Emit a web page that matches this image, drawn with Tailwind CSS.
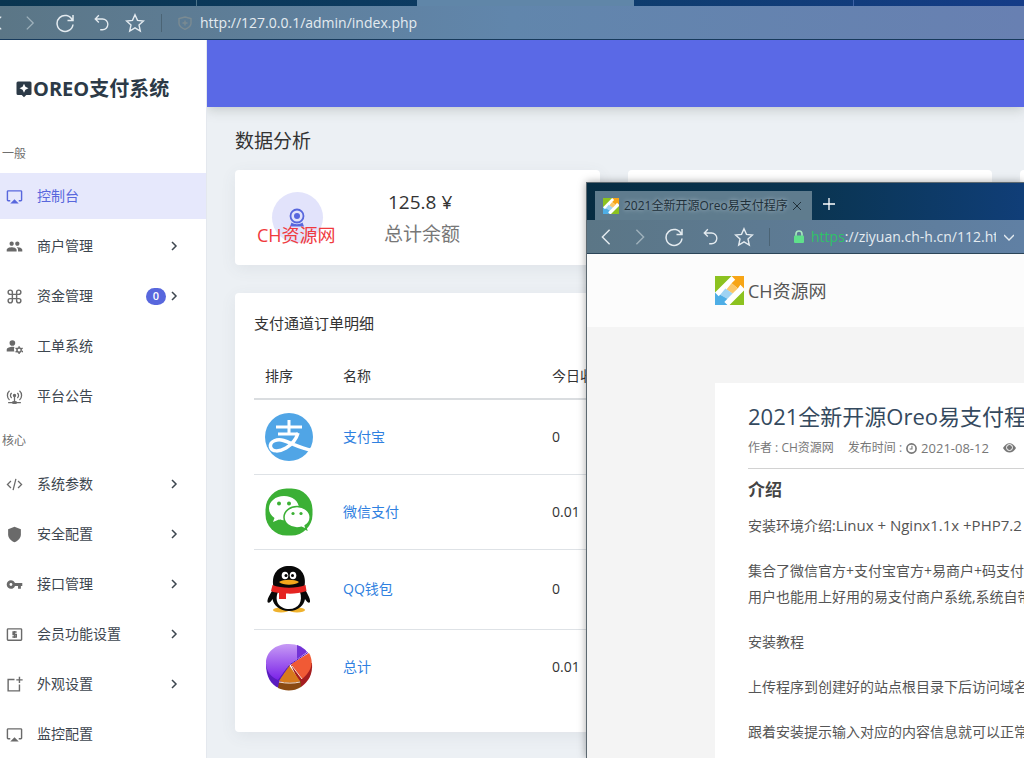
<!DOCTYPE html>
<html lang="zh-CN">
<head>
<meta charset="utf-8">
<title>OREO支付系统</title>
<script src="https://cdn.jsdelivr.net/npm/@tailwindcss/browser@4"></script>
</head>
<body class="relative flex h-screen flex-col overflow-hidden bg-[#ecf0f4] font-['Open_Sans','Noto_Sans_CJK_SC',sans-serif] text-sm text-[#333]">
<svg class="hidden">
  <defs>
    <symbol id="reload" viewBox="0 0 20 20" fill="none" stroke="currentColor" stroke-width="1.5"><path d="M18 2v5.5h-5.5M17.4 7.2A8 8 0 1 0 18 11.5"/></symbol>
    <symbol id="undo" viewBox="0 0 20 20" fill="none" stroke="currentColor" stroke-width="1.5"><path d="M6.5 1.5 2.5 5.5l4 4M2.5 5.5h8a6 6 0 0 1 0 12H8"/></symbol>
    <symbol id="star" viewBox="0 0 20 20" fill="none" stroke="currentColor" stroke-width="1.4"><path d="m10 1.8 2.5 5.6 6 .6-4.5 4 1.3 6-5.3-3.1L4.7 18 6 12 1.5 8l6-.6z"/></symbol>
    <symbol id="back" viewBox="0 0 20 20" fill="none" stroke="currentColor" stroke-width="1.6"><path d="m14 2-8 8 8 8"/></symbol>
    <symbol id="next" viewBox="0 0 20 20" fill="none" stroke="currentColor" stroke-width="1.6"><path d="m6 2 8 8-8 8"/></symbol>
    <symbol id="chev" viewBox="0 0 10 10" fill="none" stroke="currentColor" stroke-width="1.5"><path d="m3 1 4 4-4 4"/></symbol>
    <symbol id="screen" viewBox="0 0 24 24" fill="currentColor"><path d="M6 22h12l-6-6-6 6zM21 3H3c-1.1 0-2 .9-2 2v12c0 1.1.9 2 2 2h3v-2H3V5h18v12h-3v2h3c1.1 0 2-.9 2-2V5c0-1.1-.9-2-2-2z"/></symbol>
    <symbol id="brand" viewBox="0 0 28 28"><path fill="#fff" d="M0 0h28v28H0z"/><path fill="#8cc220" d="M0 0h16L0 16zM28 28H14L28 14z"/><path fill="#f7a516" d="M16 0h12v12l-3.500-3.500L22 12l-6-5 3.500-3.500z"/><path fill="#fbc768" d="m16 7 6 5-5 5-6-4z"/><path fill="#9fd3f3" d="m10 12 7 5-5 5-7-4z"/><path fill="#4eaee6" d="M0 28V16l3.500 3.500L5 18l7 4-3 3 3 3z"/></symbol>
  </defs>
</svg>

<!-- Main browser chrome -->
<div class="flex h-1.5 shrink-0 bg-linear-to-r from-[#0a3550] via-[#0d3c66] to-[#153c88]">
  <div class="w-[197px] border-r border-[#4d7389]"></div>
  <div class="w-[220px]"></div>
  <div class="w-[217px] bg-[#6086a8]"></div>
  <div class="w-[220px] border-r border-[#3e62a5]"></div>
</div>
<header class="flex h-[34px] shrink-0 items-center overflow-hidden border-b border-[#173a5c] bg-linear-to-r from-[#5b7686] via-[#6186ac] to-[#6880b2] text-[#e4ebf0]">
  <button aria-label="后退" class="-ml-2.5 w-4"><svg class="size-4"><use href="#back"/></svg></button>
  <button aria-label="前进" class="ml-4 text-[#9fb1bc]"><svg class="block size-4"><use href="#next"/></svg></button>
  <button aria-label="刷新" class="ml-[17px]"><svg class="block size-5"><use href="#reload"/></svg></button>
  <button aria-label="撤销" class="ml-[18px]"><svg class="block size-[18px]"><use href="#undo"/></svg></button>
  <button aria-label="收藏" class="ml-3.5"><svg class="block size-5"><use href="#star"/></svg></button>
  <span class="ml-4 h-[18px] w-px bg-[#4b6475]"></span>
  <svg class="ml-4 size-3.5 shrink-0 text-[#7b8b92]" viewBox="0 0 14 14" fill="none" stroke="currentColor" stroke-width="1.4"><path d="M7 1 13 2.500v5C13 10 10 12 7 13.300 4 12 1 10 1 7.500v-5zM7 4.500v5M4.500 7h5"/></svg>
  <input aria-label="地址" value="http://127.0.0.1/admin/index.php" class="ml-2 min-w-0 flex-1 bg-transparent text-sm outline-none">
</header>

<div class="flex min-h-0 flex-1">
  <!-- Sidebar -->
  <aside class="w-[207px] shrink-0 overflow-hidden border-r border-[#e4e8ee] bg-white text-[#3d464f]">
    <h1 class="flex h-[93px] items-center pt-1 pl-[15px] text-xl font-bold text-[#2c3a47]">
      <svg class="size-[18px]" viewBox="0 0 24 24"><path fill="currentColor" d="M4 2h16a2 2 0 0 1 2 2v14a2 2 0 0 1-2 2h-5l-3 3-3-3H4a2 2 0 0 1-2-2V4a2 2 0 0 1 2-2z"/><path fill="#fff" d="m12 5 1.900 4.100L18 11l-4.100 1.900L12 17l-1.900-4.100L6 11l4.100-1.900z"/></svg>
      <span>OREO支付系统</span>
    </h1>
    <h2 class="flex h-10 items-center pt-0.5 pl-0.5 text-xs text-[#6f6f6f]">一般</h2>
    <nav class="flex flex-col gap-1">
      <a href="#" class="flex h-[46px] items-center bg-[#e6e8fc] pl-1.5 text-[#5867dd]"><svg class="size-[17px]"><use href="#screen"/></svg><span class="ml-3.5">控制台</span></a>
      <a href="#" class="flex h-[46px] items-center pr-[27px] pl-1.5"><svg class="size-[17px] text-[#6a6a6a]" viewBox="0 0 24 24" fill="currentColor"><path d="M16 11c1.660 0 2.990-1.340 2.990-3S17.660 5 16 5s-3 1.340-3 3 1.340 3 3 3zm-8 0c1.660 0 2.990-1.340 2.990-3S9.660 5 8 5 5 6.340 5 8s1.340 3 3 3zm0 2c-2.330 0-7 1.170-7 3.500V19h14v-2.500c0-2.330-4.670-3.500-7-3.500zm8 0c-.29 0-.62.02-.97.05 1.160.84 1.970 1.970 1.970 3.450V19h6v-2.500c0-2.330-4.670-3.500-7-3.500z"/></svg><span class="ml-3.5 flex-1">商户管理</span><svg class="size-2.5"><use href="#chev"/></svg></a>
      <a href="#" class="flex h-[46px] items-center pr-[27px] pl-1.5"><svg class="size-[17px] text-[#6a6a6a]" viewBox="0 0 24 24" fill="none" stroke="currentColor" stroke-width="2"><path d="M18 3a3 3 0 0 0-3 3v12a3 3 0 1 0 3-3H6a3 3 0 1 0 3 3V6a3 3 0 1 0-3 3h12a3 3 0 0 0 0-6z"/></svg><span class="ml-3.5 flex-1">资金管理</span><span class="mr-[3px] flex h-[17px] w-5 items-center justify-center rounded-full bg-[#5867dd] text-[11px] font-semibold text-white">0</span><svg class="size-2.5"><use href="#chev"/></svg></a>
      <a href="#" class="flex h-[46px] items-center pl-1.5"><svg class="size-[17px] text-[#6a6a6a]" viewBox="0 0 24 24" fill="currentColor"><circle cx="9" cy="7" r="4"/><path d="M1 19v-2.500c0-2.600 5-4 8-4 1 0 2 .1 3 .4-1 1.800-1 4.200 0 6.100z"/><circle cx="18.500" cy="17" r="3" fill="none" stroke="currentColor" stroke-width="2"/><path d="M17.500 11.500h2V14h-2zM17.500 20h2v2.500h-2zM13 15l1-1.700 2.200 1.200-1 1.800zM21.800 19.500l1-1.800 1.900 1.200-1 1.700zM15.200 17.700l1 1.800-2.200 1.200-1-1.700zM23 13.300l1 1.700-2.200 1.300-1-1.800z"/></svg><span class="ml-3.5">工单系统</span></a>
      <a href="#" class="flex h-[46px] items-center pl-1.5"><svg class="size-[17px] text-[#6a6a6a]" viewBox="0 0 24 24" fill="none" stroke="currentColor" stroke-width="1.8"><path d="M5 4c-4 3.500-4 9.500 0 13M19 4c4 3.500 4 9.500 0 13M8 7c-2.300 2-2.300 5 0 7M16 7c2.300 2 2.300 5 0 7M12 12v8M3 20.500h18"/><circle cx="12" cy="10.500" r="1.500" fill="currentColor"/><path d="M9 20.500h6" stroke-width="4"/></svg><span class="ml-3.5">平台公告</span></a>
    </nav>
    <h2 class="flex h-[42px] items-center pt-0.5 pl-0.5 text-xs text-[#6f6f6f]">核心</h2>
    <nav class="flex flex-col gap-1">
      <a href="#" class="flex h-[46px] items-center pr-[27px] pl-1.5"><svg class="size-[17px] text-[#6a6a6a]" viewBox="0 0 24 24" fill="none" stroke="currentColor" stroke-width="1.8"><path d="m7 7-5 5 5 5M17 7l5 5-5 5M14 4l-4 16"/></svg><span class="ml-3.5 flex-1">系统参数</span><svg class="size-2.5"><use href="#chev"/></svg></a>
      <a href="#" class="flex h-[46px] items-center pr-[27px] pl-1.5"><svg class="size-[17px] text-[#6a6a6a]" viewBox="0 0 24 24" fill="currentColor"><path d="m12 1 9 3.500V12c0 5-4 8.800-9 11-5-2.200-9-6-9-11V4.500z"/></svg><span class="ml-3.5 flex-1">安全配置</span><svg class="size-2.5"><use href="#chev"/></svg></a>
      <a href="#" class="flex h-[46px] items-center pr-[27px] pl-1.5"><svg class="size-[17px] text-[#6a6a6a]" viewBox="0 0 24 24" fill="currentColor"><path d="M12.650 10C11.830 7.670 9.610 6 7 6c-3.310 0-6 2.690-6 6s2.690 6 6 6c2.610 0 4.830-1.670 5.650-4H17v4h4v-4h2v-4H12.650zM7 14c-1.100 0-2-.9-2-2s.9-2 2-2 2 .9 2 2-.9 2-2 2z"/></svg><span class="ml-3.5 flex-1">接口管理</span><svg class="size-2.5"><use href="#chev"/></svg></a>
      <a href="#" class="flex h-[46px] items-center pr-[27px] pl-1.5"><svg class="size-[17px] text-[#6a6a6a]" viewBox="0 0 24 24" fill="none" stroke="currentColor" stroke-width="2"><rect x="2" y="4" width="20" height="16" rx="1"/><path d="M15 8.500h-5V12h4.500v3.500H9M12 7v10"/></svg><span class="ml-3.5 flex-1">会员功能设置</span><svg class="size-2.5"><use href="#chev"/></svg></a>
      <a href="#" class="flex h-[46px] items-center pr-[27px] pl-1.5"><svg class="size-[17px] text-[#6a6a6a]" viewBox="0 0 24 24" fill="none" stroke="currentColor" stroke-width="2"><path d="M12 5H3v16h16v-9M19 1v9M14.500 5.500h9"/></svg><span class="ml-3.5 flex-1">外观设置</span><svg class="size-2.5"><use href="#chev"/></svg></a>
      <a href="#" class="flex h-[46px] items-center pl-1.5"><svg class="size-[17px] text-[#6a6a6a]"><use href="#screen"/></svg><span class="ml-3.5">监控配置</span></a>
    </nav>
  </aside>

  <!-- Dashboard -->
  <main class="min-w-0 flex-1 overflow-hidden">
    <div class="h-[67px] bg-[#5a69e6] shadow-[0_2px_12px_rgba(60,70,60,0.25)]"></div>
    <h2 class="mt-5 pl-7 text-[19px] leading-7">数据分析</h2>
    <div class="mt-[15px] ml-7 flex gap-7">
      <section class="relative flex h-[95px] w-[365px] shrink-0 rounded-sm bg-white shadow-[0_4px_16px_rgba(80,90,100,0.08)]">
        <div class="flex w-[124px] justify-center pt-[22px]">
          <div class="flex size-[51px] items-center justify-center rounded-full bg-[#e2e3fb]">
            <svg class="size-5 text-[#5867dd]" viewBox="0 0 20 20"><circle cx="10" cy="8" r="6.500" fill="none" stroke="currentColor" stroke-width="1.8"/><circle cx="10" cy="8" r="3" fill="currentColor"/><path fill="currentColor" d="M4.500 14.500c3 2.200 8 2.200 11 0l1.500 4H3z"/></svg>
          </div>
        </div>
        <div class="flex flex-1 flex-col pt-4 pl-[25px]">
          <div class="w-[76px] pl-1 text-[19px] leading-8 whitespace-nowrap">125.8 ¥</div>
          <div class="text-[19px] leading-8 text-[#777]">总计余额</div>
        </div>
        <div class="absolute top-[51px] left-[22px] text-lg leading-7 text-[#f03a3e]">CH资源网</div>
      </section>
      <section class="h-[95px] w-[364px] shrink-0 rounded-sm bg-white"></section>
      <section class="h-[95px] w-[364px] shrink-0 rounded-sm bg-white"></section>
    </div>
    <section class="mt-7 ml-7 rounded-sm bg-white px-[19px] pb-7 shadow-[0_4px_16px_rgba(80,90,100,0.08)]">
      <h3 class="pt-4 text-[15px] leading-7">支付通道订单明细</h3>
      <table class="mt-[17px] w-full table-fixed text-left">
        <thead>
          <tr class="h-[45px] border-b-2 border-[#dadde0]"><th class="w-[78px] pl-[11px] font-normal">排序</th><th class="w-[209px] pl-[11px] font-normal">名称</th><th class="pl-[11px] font-normal">今日收入</th></tr>
        </thead>
        <tbody>
          <tr class="h-[75px] border-b border-[#dee2e6]">
            <td class="pl-[11px]"><svg class="size-12" viewBox="0 0 48 48"><circle cx="24" cy="24" r="24" fill="#50a5e6"/><path fill="none" stroke="#fff" stroke-width="3" d="M11 14h26M24 7v13M13 21h20"/><path fill="none" stroke="#fff" stroke-width="3.500" d="M33 20c-2 7-7 12-12 15-7 4-14 4-15.500-1-1-6 7-8.500 13-6.500 8 2.500 15 7 28.500 10"/></svg></td>
            <td class="pl-[11px]"><a href="#" class="text-[#2f80e0]">支付宝</a></td><td class="pl-[11px]">0</td></tr>
          <tr class="h-[75px] border-b border-[#dee2e6]">
            <td class="pl-[11px]"><svg class="size-12" viewBox="0 0 48 48"><rect x=".5" y=".5" width="47" height="47" rx="21" fill="#3bb035"/><path fill="#fff" d="M19 8C10.500 8 4 13.500 4 20.500c0 4 2 7 5.500 9.500L8 34l6-2.500c2 .6 3.500.8 6 .8 8.500 0 14-5 14-12S27.500 8 19 8z"/><path fill="#fff" stroke="#3bb035" stroke-width="1.5" d="M32 18.500c-7 0-13 4.700-13 10.700S25 40 32 40c1.500 0 3-.2 4.500-.7l5 2.200-1.300-3.800c3-2 5-5 5-8.500 0-6-6-10.700-13.200-10.700z"/><g fill="#3bb035"><circle cx="14" cy="15.500" r="2"/><circle cx="24" cy="15.500" r="2"/><circle cx="28" cy="25.500" r="1.600"/><circle cx="36" cy="25.500" r="1.600"/></g></svg></td>
            <td class="pl-[11px]"><a href="#" class="text-[#2f80e0]">微信支付</a></td><td class="pl-[11px]">0.01</td></tr>
          <tr class="h-20 border-b border-[#dee2e6]">
            <td class="pl-[11px]"><svg class="size-12" viewBox="0 0 48 48"><ellipse cx="16" cy="45" rx="8" ry="2.500" fill="#efb22e"/><ellipse cx="32" cy="45" rx="8" ry="2.500" fill="#efb22e"/><path fill="#080808" d="M8.500 22C7 28 2 32 2.500 37c1 2 3.500 0 5-3 1 6 7 12 16.500 12s15-6 16-12c2 3 4 5 5 3 .5-5-4-9-5.500-15C42 9 35 1 24 1S6 9 8.500 22z"/><path fill="#fff" d="M13 27h22c3 9-1 17-11 17S9 36 13 27z"/><path fill="#e52421" d="M7.500 20c9 3.500 24 3.500 33 0l1 6c-7 2.500-14 3-20.500 2.600V34h-7v-6c-4-.5-6-1-8-2z"/><ellipse cx="20" cy="10.500" rx="3.300" ry="3.800" fill="#fff"/><ellipse cx="28" cy="10.500" rx="3.300" ry="3.800" fill="#fff"/><circle cx="21" cy="10.500" r="1.500"/><circle cx="27.500" cy="10.500" r="1.500"/><path fill="#f5a81c" d="M14 17c4-3 16-3 20 0-4 3.500-16 3.500-20 0z"/></svg></td>
            <td class="pl-[11px]"><a href="#" class="text-[#2f80e0]">QQ钱包</a></td><td class="pl-[11px]">0</td></tr>
          <tr class="h-[75px]">
            <td class="pl-[11px]"><svg class="size-12" viewBox="0 0 48 48"><defs><linearGradient id="violet" x2="0" y2="1"><stop stop-color="#c79bf5"/><stop offset="1" stop-color="#7a22e8"/></linearGradient></defs><path fill="#5a1cc0" d="M1 21c0 13 5 21 13 24l10-24z"/><path fill="#a51d1f" d="M47 20c1 12-4 19-11 24L26 22z"/><path fill="#8a4a12" d="m14 39-1 6c7 3.500 16 3.500 23-1v-6z"/><path fill="url(#violet)" d="M24 22 42 9C38 4 32 1 24 1 10 1 1 9 1 20c0 8 5 14 12 17z"/><path fill="#7333d6" d="M32 2c4 1.500 8 4 10 7l-10 7z"/><path fill="#f05a35" d="m26 21 18-11c5 9 3 18-7 26z"/><path fill="#d77a1c" d="m24 22 11 16c-6 2-15 2-21 0z"/><path fill="none" stroke="#5a1cc0" d="M43 9.500 25 21.500 13 38"/><path fill="none" stroke="#f3dccd" d="M14 39c7 1.500 15 1.500 21 0M27 23l10 13"/></svg></td>
            <td class="pl-[11px]"><a href="#" class="text-[#2f80e0]">总计</a></td><td class="pl-[11px]">0.01</td></tr>
        </tbody>
      </table>
    </section>
  </main>
</div>

<!-- Floating browser window -->
<div class="absolute top-[182px] right-0 bottom-0 left-[586px] flex flex-col overflow-hidden border-t border-l border-[#5c6870] bg-[#f4f4f4] shadow-[0_0_8px_rgba(0,0,0,0.35)]">
  <div class="flex h-[37px] shrink-0 bg-linear-to-r from-[#062c42] via-[#0a3450] to-[#103e78] pt-2 pl-2">
    <div class="flex w-[217px] items-center bg-[#5f7c8e] pl-2 text-xs text-[#20303a]">
      <svg class="size-4 shrink-0"><use href="#brand"/></svg>
      <span class="ml-[5px] flex-1 whitespace-nowrap text-shadow-[0_0_4px_#b8c8d2]">2021全新开源Oreo易支付程序</span>
      <button aria-label="关闭标签页" class="mr-2.5"><svg class="size-2.5" viewBox="0 0 10 10" stroke="currentColor"><path d="m1 1 8 8M9 1 1 9"/></svg></button>
    </div>
    <button aria-label="新标签页" class="ml-2.5 pb-1 text-white"><svg class="size-3.5" viewBox="0 0 14 14" stroke="currentColor" stroke-width="1.3"><path d="M7 1v12M1 7h12"/></svg></button>
  </div>
  <div class="flex h-[34px] shrink-0 items-center border-b border-[#2b4558] bg-linear-to-r from-[#5b7686] to-[#6080a4] text-[#e4ebf0]">
    <button aria-label="后退" class="ml-2.5"><svg class="block size-[18px]"><use href="#back"/></svg></button>
    <button aria-label="前进" class="ml-4 text-[#9fb1bc]"><svg class="block size-[18px]"><use href="#next"/></svg></button>
    <button aria-label="刷新" class="ml-[15px]"><svg class="block size-5"><use href="#reload"/></svg></button>
    <button aria-label="撤销" class="ml-[18px]"><svg class="block size-[18px]"><use href="#undo"/></svg></button>
    <button aria-label="收藏" class="ml-3.5"><svg class="block size-5"><use href="#star"/></svg></button>
    <span class="ml-[15px] h-[18px] w-px bg-[#4b6475]"></span>
    <svg class="ml-[23px] h-[13px] w-3 shrink-0" viewBox="0 0 12 13"><path d="M3 6V4a3 3 0 0 1 6 0v2" fill="none" stroke="#a8e6c0" stroke-width="1.6"/><rect x="1" y="5.500" width="10" height="7.500" rx="1" fill="#5fe08b"/></svg>
    <div class="ml-1.5 min-w-0 flex-1 overflow-hidden whitespace-nowrap"><span class="text-[#2fc268]">https</span>://ziyuan.ch-h.cn/112.html</div>
    <button aria-label="展开" class="mr-2.5 ml-2"><svg class="block size-2.5" viewBox="0 0 10 10" fill="none" stroke="currentColor" stroke-width="1.4"><path d="m0 3 5 5 5-5"/></svg></button>
  </div>
  <div class="flex h-[73px] shrink-0 items-center bg-[#fcfcfc] pl-32">
    <svg class="size-[29px]"><use href="#brand"/></svg>
    <span class="ml-1 text-lg text-[#555]">CH资源网</span>
  </div>
  <article class="mt-14 ml-32 flex-1 overflow-hidden bg-white pt-[17px] pl-[33px] whitespace-nowrap text-[#555]">
    <h2 class="text-[22px] leading-8 text-[#34495e]">2021全新开源Oreo易支付程序</h2>
    <div class="flex h-[37px] items-center border-b border-[#d2d2d2] pb-1 text-[13px] text-[#777]">
      <span class="text-xs">作者 : CH资源网</span><span class="ml-3.5 text-xs">发布时间 :</span>
      <svg class="mr-1 ml-1 size-[11px] shrink-0" viewBox="0 0 12 12" fill="none" stroke="currentColor" stroke-width="1.8"><circle cx="6" cy="6" r="5"/><path d="M6.500 3v3.500H4" stroke-width="1.200"/></svg>
      <span>2021-08-12</span>
      <svg class="ml-3.5 h-2.5 w-[13px] shrink-0" viewBox="0 0 13 10"><path fill="#777" d="M0 5c3.500-6.500 9.500-6.500 13 0-3.500 6-9.500 6-13 0z"/><circle cx="6.500" cy="4.500" r="3" fill="none" stroke="#fff"/></svg>
    </div>
    <h3 class="mt-2 text-[17px] leading-[26px] font-bold text-[#444]">介绍</h3>
    <p class="mt-[9px] leading-[26px]">安装环境介绍:<span class="text-[15px]">Linux + Nginx1.1x +PHP7.2</span></p>
    <p class="mt-[19px] leading-[26px]">集合了微信官方+支付宝官方+易商户+码支付<br>用户也能用上好用的易支付商户系统,系统自带</p>
    <p class="mt-[19px] leading-[26px]">安装教程</p>
    <p class="mt-[19px] leading-[26px]">上传程序到创建好的站点根目录下后访问域名</p>
    <p class="mt-[19px] leading-[26px]">跟着安装提示输入对应的内容信息就可以正常</p>
  </article>
</div>
</body>
</html>
